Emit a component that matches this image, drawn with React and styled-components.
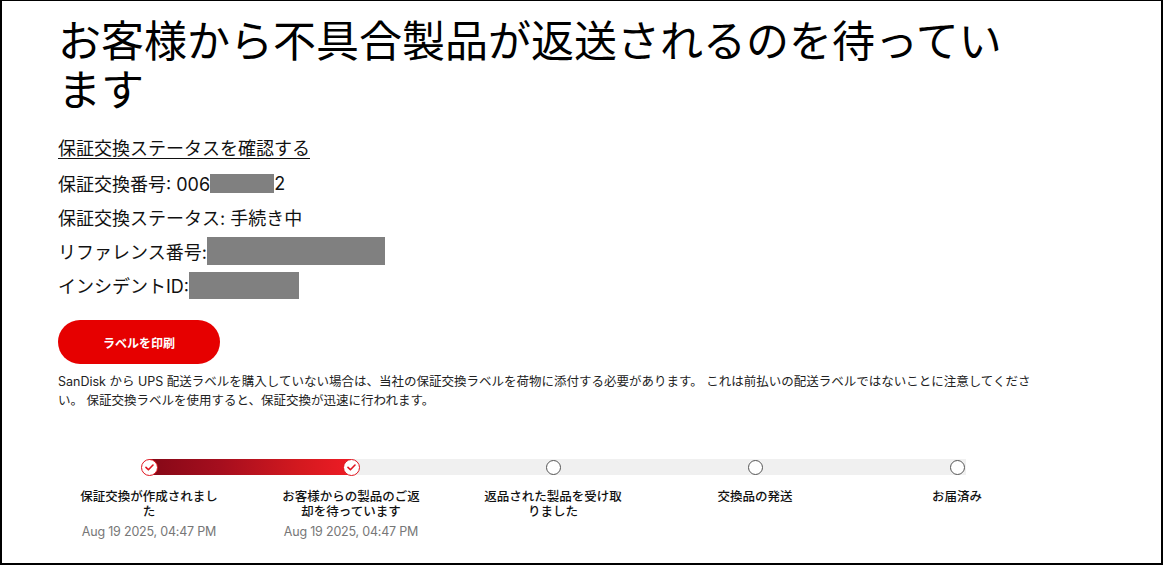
import React from 'react'
import styled, { createGlobalStyle } from 'styled-components'

const GlobalStyle = createGlobalStyle`
  html, body {
    margin: 0;
    padding: 0;
    background: #fff;
  }
  body {
    font-family: Inter, "Noto Sans CJK JP", "Noto Sans", sans-serif;
    color: #111;
  }
`

const Frame = styled.div`
  width: 1163px;
  height: 565px;
  box-sizing: border-box;
  border: 2px solid #000;
  border-top-width: 1px;
  overflow: hidden;
`

const Content = styled.div`
  width: 980px;
  padding-left: 56px;
`

const Title = styled.h1`
  margin: 16px 0 17px;
  font-size: 43px;
  line-height: 49px;
  font-weight: 400;
  color: #000;
`

const StatusLink = styled.a`
  display: block;
  font-size: 18px;
  line-height: 34px;
  color: #111;
  text-decoration: underline;
  text-underline-offset: 3px;
  cursor: pointer;
`

const InfoRow = styled.div`
  display: flex;
  align-items: center;
  height: 34px;
  font-size: 18px;
`

const Masked = styled.span`
  display: inline-block;
  width: ${(props) => props.w}px;
  height: ${(props) => props.h || 28}px;
  background: #808080;
`

const PrintButton = styled.button`
  display: block;
  margin-top: 18px;
  width: 162px;
  height: 44px;
  border: none;
  border-radius: 22px;
  background: #e60000;
  color: #fff;
  font-family: inherit;
  font-size: 12px;
  font-weight: 700;
  cursor: pointer;
`

const Note = styled.p`
  margin: 8px 0 0;
  font-size: 12.5px;
  line-height: 19px;
  color: #222;
`

const Progress = styled.div`
  margin: 48px 0 0 -10px;
  width: 1010px;
`

const Track = styled.div`
  position: relative;
  display: grid;
  grid-template-columns: repeat(5, 1fr);
  height: 18px;
  align-items: center;
`

const TrackBg = styled.div`
  position: absolute;
  top: 1px;
  left: 101px;
  right: 92px;
  height: 16px;
  background: #f0f0f0;
`

const TrackFill = styled.div`
  position: absolute;
  top: 1px;
  left: 101px;
  height: 16px;
  background: linear-gradient(to right, #850817, #a50e1e 35%, #d4191f 75%, #ee1c25);
`

const Node = styled.div`
  position: relative;
  z-index: 1;
  justify-self: center;
  box-sizing: border-box;
  width: ${(props) => (props.done ? 17 : 15)}px;
  height: ${(props) => (props.done ? 17 : 15)}px;
  border-radius: 50%;
  background: #fff;
  border: ${(props) => (props.done ? '1.5px solid #e0141e' : '1px solid #555')};
  display: flex;
  align-items: center;
  justify-content: center;
`

const Labels = styled.div`
  display: grid;
  grid-template-columns: repeat(5, 1fr);
  margin-top: 13px;
`

const Step = styled.div`
  display: flex;
  flex-direction: column;
  align-items: center;
  text-align: center;
`

const StepName = styled.div`
  width: 142px;
  font-size: 12.5px;
  line-height: 15px;
  font-weight: 500;
  color: #111;
`

const StepDate = styled.div`
  margin-top: 5px;
  font-size: 12.5px;
  line-height: 15px;
  color: #777;
  letter-spacing: -0.2px;
`

const Check = () => (
  <svg width="9" height="7" viewBox="0 0 9 7" fill="none">
    <path d="M1 3.4 L3.4 5.8 L8 1" stroke="#e0141e" strokeWidth="1.6" strokeLinecap="round" strokeLinejoin="round" />
  </svg>
)

const steps = [
  { name: '保証交換が作成されました', date: 'Aug 19 2025, 04:47 PM', done: true },
  { name: 'お客様からの製品のご返却を待っています', date: 'Aug 19 2025, 04:47 PM', done: true },
  { name: '返品された製品を受け取りました', date: null, done: false },
  { name: '交換品の発送', date: null, done: false },
  { name: 'お届済み', date: null, done: false },
]

const App = () => {
  const doneCount = steps.filter((s) => s.done).length
  const fillWidth = (doneCount - 1) * 202

  return (
    <Frame>
      <GlobalStyle />
      <Content>
        <Title>お客様から不具合製品が返送されるのを待っています</Title>
        <StatusLink>保証交換ステータスを確認する</StatusLink>
        <InfoRow>
          保証交換番号: 006<Masked w={64} h={19} />2
        </InfoRow>
        <InfoRow>保証交換ステータス: 手続き中</InfoRow>
        <InfoRow>
          リファレンス番号:<Masked w={178} />
        </InfoRow>
        <InfoRow>
          インシデントID:<Masked w={110} h={27} />
        </InfoRow>
        <PrintButton>ラベルを印刷</PrintButton>
        <Note>
          SanDisk から UPS 配送ラベルを購入していない場合は、当社の保証交換ラベルを荷物に添付する必要があります。 これは前払いの配送ラベルではないことに注意してください。 保証交換ラベルを使用すると、保証交換が迅速に行われます。
        </Note>
        <Progress>
          <Track>
            <TrackBg />
            <TrackFill style={{ width: fillWidth }} />
            {steps.map((s, i) => (
              <Node key={i} done={s.done}>
                {s.done && <Check />}
              </Node>
            ))}
          </Track>
          <Labels>
            {steps.map((s, i) => (
              <Step key={i}>
                <StepName>{s.name}</StepName>
                {s.date && <StepDate>{s.date}</StepDate>}
              </Step>
            ))}
          </Labels>
        </Progress>
      </Content>
    </Frame>
  )
}

export default App
